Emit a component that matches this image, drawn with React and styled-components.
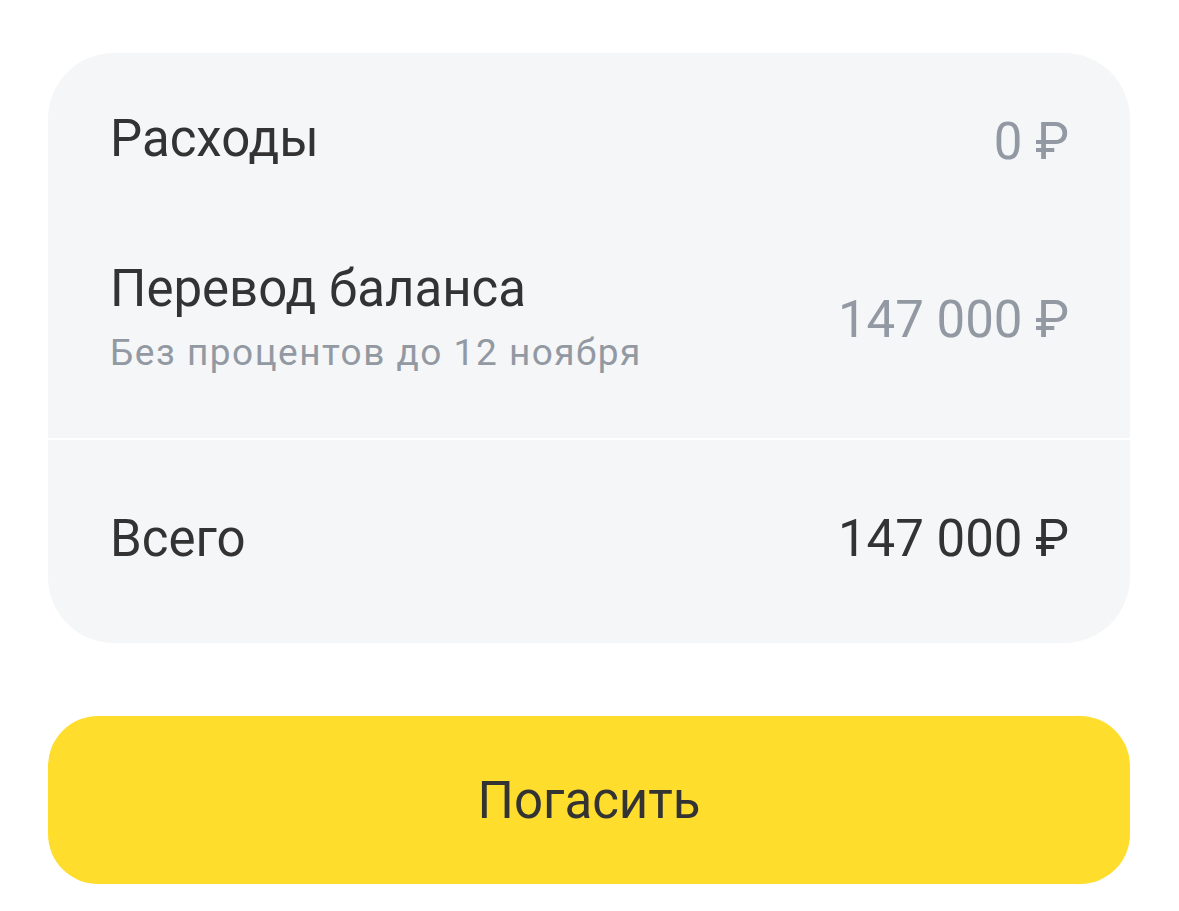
import React from 'react';
import styled, { createGlobalStyle } from 'styled-components';

const Global = createGlobalStyle`
  body {
    margin: 0;
    background: #ffffff;
    font-family: Roboto, "Noto Sans", "Liberation Sans", sans-serif;
    -webkit-font-smoothing: antialiased;
  }
`;

const rows = [
  { title: 'Расходы', value: '0 ₽', height: 170, top: 8 },
  { title: 'Перевод баланса', sub: 'Без процентов до 12 ноября', value: '147 000 ₽', height: 194, top: 0 },
];

export default function App() {
  return (
    <Page>
      <Global />
      <Card>
        <Section>
          {rows.map((r) => (
            <Row key={r.title} h={r.height} top={r.top}>
              <Label>
                <Title>{r.title}</Title>
                {r.sub && <Sub>{r.sub}</Sub>}
              </Label>
              <Value>{r.value}</Value>
            </Row>
          ))}
        </Section>
        <Divider />
        <TotalRow>
          <Title>Всего</Title>
          <Value dark>147 000 ₽</Value>
        </TotalRow>
      </Card>
      <PayButton>Погасить</PayButton>
    </Page>
  );
}

const Page = styled.div`
  width: 1082px;
  padding: 53px 0 0 48px;
  display: flex;
  flex-direction: column;
  gap: 73px;
`;

const Card = styled.div`
  background: #f5f6f8;
  border-radius: 66px;
  display: flex;
  flex-direction: column;
  overflow: hidden;
`;

const Section = styled.div`
  display: flex;
  flex-direction: column;
  padding-bottom: 21px;
`;

const Row = styled.div`
  box-sizing: border-box;
  height: ${(p) => p.h}px;
  padding: ${(p) => p.top}px 61px 0 62px;
  display: flex;
  align-items: center;
  justify-content: space-between;
`;

const Label = styled.div`
  display: flex;
  flex-direction: column;
  gap: 12px;
  margin-bottom: 6px;
`;

const Title = styled.div`
  font-size: 51px;
  line-height: 60px;
  color: #333333;
`;

const Sub = styled.div`
  font-size: 37px;
  line-height: 44px;
  letter-spacing: 1.5px;
  color: #9299a2;
`;

const Value = styled.div`
  font-size: 51px;
  line-height: 60px;
  color: ${(p) => (p.dark ? '#333333' : '#9299a2')};
`;

const Divider = styled.div`
  height: 2px;
  background: #ffffff;
`;

const TotalRow = styled.div`
  height: 197px;
  padding: 0 61px 6px 62px;
  display: flex;
  align-items: center;
  justify-content: space-between;
`;

const PayButton = styled.button`
  height: 168px;
  border: none;
  border-radius: 50px;
  background: #ffdd2d;
  color: #333333;
  font-family: Roboto, "Noto Sans", "Liberation Sans", sans-serif;
  font-size: 51px;
  padding: 0;
  cursor: pointer;
`;
